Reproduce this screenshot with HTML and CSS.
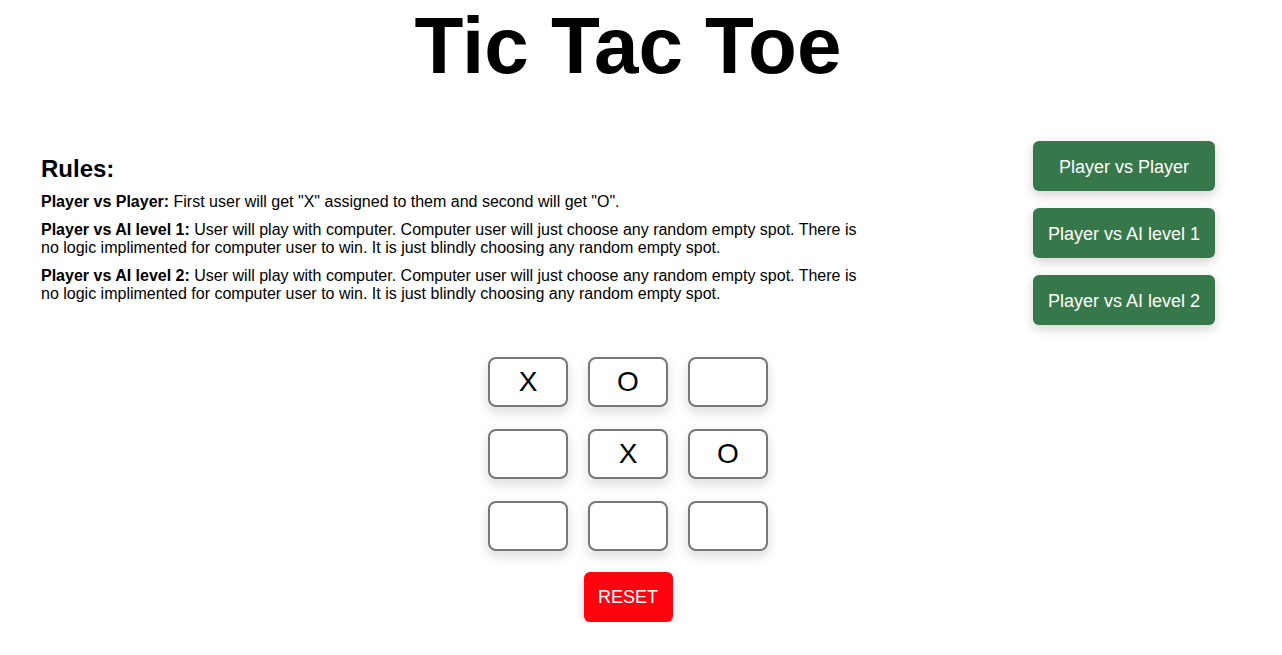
FILE: index.html
```html
<!DOCTYPE html>
<html lang="en">
<head>
<meta charset="utf-8">
<title>Tic Tac Toe</title>
<link rel="stylesheet" href="styles.css">
</head>
<body>
<div class="page">
  <h1 class="title">Tic Tac Toe</h1>
  <div class="top">
    <section class="rules">
      <h2 class="rules-title">Rules:</h2>
      <p class="rule"><b class="rule-name">Player vs Player:</b> First user will get "X" assigned to them and second will get "O".</p>
      <p class="rule"><b class="rule-name">Player vs AI level 1:</b> User will play with computer. Computer user will just choose any random empty spot. There is no logic implimented for computer user to win. It is just blindly choosing any random empty spot.</p>
      <p class="rule"><b class="rule-name">Player vs AI level 2:</b> User will play with computer. Computer user will just choose any random empty spot. There is no logic implimented for computer user to win. It is just blindly choosing any random empty spot.</p>
    </section>
    <div class="modes">
      <button class="mode">Player vs Player</button>
      <button class="mode">Player vs AI level 1</button>
      <button class="mode">Player vs AI level 2</button>
    </div>
  </div>
  <div class="board">
    <button class="cell">X</button>
    <button class="cell">O</button>
    <button class="cell"></button>
    <button class="cell"></button>
    <button class="cell">X</button>
    <button class="cell">O</button>
    <button class="cell"></button>
    <button class="cell"></button>
    <button class="cell"></button>
  </div>
  <div class="actions">
    <button class="reset">RESET</button>
  </div>
</div>
</body>
</html>
```

FILE: styles.css
```css
html, body {
  margin: 0;
  padding: 0;
  background: #ffffff;
}

body {
  font-family: "Liberation Sans", Arial, Helvetica, sans-serif;
  color: #000;
}

.page {
  width: 1256px;
}

.title {
  margin: 0;
  text-align: center;
  font-size: 80px;
  font-weight: bold;
  line-height: normal;
}

.top {
  display: flex;
  justify-content: space-between;
  align-items: flex-start;
  padding: 0 41px;
  margin-top: 49px;
}

.rules {
  width: 830px;
  padding-top: 14px;
}

.rules-title {
  margin: 0 0 10px;
  font-size: 24px;
  font-weight: bold;
  line-height: normal;
}

.rule {
  margin: 0 0 10px;
  font-size: 16px;
  line-height: 18px;
}

.rule-name {
  font-weight: bold;
}

.modes {
  display: flex;
  flex-direction: column;
  gap: 17px;
}

.mode {
  width: 182px;
  height: 50px;
  border: none;
  border-radius: 6px;
  background: #37784a;
  color: #fff;
  font-family: "Liberation Sans", Arial, Helvetica, sans-serif;
  font-size: 18px;
  box-shadow: 0 4px 12px rgba(0, 0, 0, 0.18);
  padding: 2px 0 0;
}

.board {
  display: grid;
  grid-template-columns: repeat(3, 80px);
  grid-auto-rows: 50px;
  column-gap: 20px;
  row-gap: 22px;
  justify-content: center;
  margin-top: 32px;
}

.cell {
  box-sizing: border-box;
  width: 80px;
  height: 50px;
  border: 2px solid #777;
  border-radius: 8px;
  background: #fff;
  color: #000;
  font-family: "Liberation Sans", Arial, Helvetica, sans-serif;
  font-size: 28px;
  padding: 0;
  box-shadow: 0 5px 12px rgba(0, 0, 0, 0.15);
}

.actions {
  display: flex;
  justify-content: center;
  margin-top: 21px;
}

.reset {
  width: 89px;
  height: 50px;
  border: none;
  border-radius: 6px;
  background: #ff040f;
  color: #fff;
  font-family: "Liberation Sans", Arial, Helvetica, sans-serif;
  font-size: 18px;
  padding: 1px 0 0;
  box-shadow: 0 5px 12px rgba(0, 0, 0, 0.15);
}
```
